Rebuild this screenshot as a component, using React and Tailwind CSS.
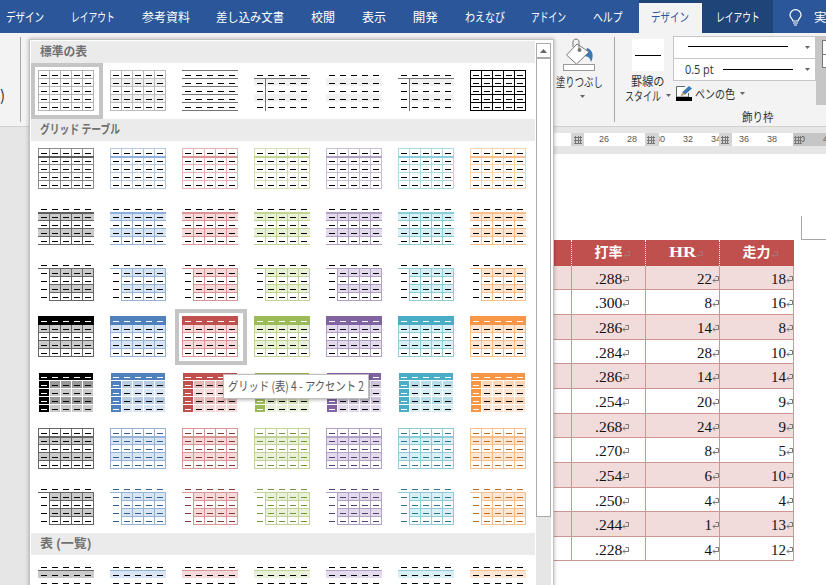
import { useLayoutEffect, useRef, useState } from "react";

const tabs = [
  ["デザイン", 38],
  ["レイアウト", 44],
  ["参考資料", 48],
  ["差し込み文書", 68],
  ["校閲", 24],
  ["表示", 24],
  ["開発", 25],
  ["わえなび", 40],
  ["アドイン", 35],
  ["ヘルプ", 30],
];

const palette = [
  { main: "#000000", line: "#666666", soft: "#8c8c8c", strong: "#5c5c5c", shade: "#cacaca", mid: "#999999", ink: "#000000" },
  { main: "#4f81bd", line: "#95b3d7", soft: "#b4c9e2", strong: "#8fb0dc", shade: "#d8e5f4", mid: "#b8cce4", ink: "#365f91" },
  { main: "#c0504d", line: "#d99694", soft: "#e6b6b5", strong: "#d99694", shade: "#f5dad9", mid: "#e5b9b7", ink: "#833c3a" },
  { main: "#9bbb59", line: "#c0d498", soft: "#d3e0b5", strong: "#c0d692", shade: "#e9f2d8", mid: "#d7e3bc", ink: "#76923c" },
  { main: "#8064a2", line: "#b0a0c6", soft: "#c9bdd9", strong: "#b0a0c6", shade: "#e3dbed", mid: "#ccc1d9", ink: "#524070" },
  { main: "#4bacc6", line: "#8fcbd9", soft: "#afdbe5", strong: "#8ccddc", shade: "#d8eff5", mid: "#b7dde8", ink: "#31758b" },
  { main: "#f79646", line: "#f9be8c", soft: "#fbd3ae", strong: "#fabf8f", shade: "#fde6d3", mid: "#fbd5b5", ink: "#bd6e25" },
];

const gridStyles = ["grid1", "grid2", "grid3", "grid4", "grid5", "grid6", "grid7"];
const plainStyles = ["plain0", "plain1", "plain2", "plain3", "plain4", "plain5", "plain6"];

const players = [
  [".288", "22", "18", "h-[24px]"],
  [".300", "8", "16", "h-[25px]"],
  [".286", "14", "8", "h-[25px]"],
  [".284", "28", "10", "h-[24px]"],
  [".286", "14", "14", "h-[25px]"],
  [".254", "20", "9", "h-[25px]"],
  [".268", "24", "9", "h-[24px]"],
  [".270", "8", "5", "h-[25px]"],
  [".254", "6", "10", "h-[25px]"],
  [".250", "4", "4", "h-[24px]"],
  [".244", "1", "13", "h-[25px]"],
  [".228", "4", "12", "h-[24px]"],
];

// Condenses a label to the given width
function Fit({ children, width, className = "" }) {
  const ref = useRef(null);
  const [scale, setScale] = useState(1);

  useLayoutEffect(() => {
    setScale(width / ref.current.offsetWidth);
  }, [width, children]);

  return (
    <span className={`block shrink-0 ${className}`} style={{ width }}>
      <span
        ref={ref}
        className="inline-block origin-left whitespace-nowrap align-top"
        style={{ transform: `scaleX(${scale})` }}
      >
        {children}
      </span>
    </span>
  );
}

function Arrow() {
  return (
    <svg width="5" height="3" viewBox="0 0 5 3" className="shrink-0">
      <path d="M0 0h5L2.5 3z" fill="#666" />
    </svg>
  );
}

const X = [7, 18, 29, 40, 51, 62];
const Y = [7, 15, 23, 31, 39, 47];

function Thumb({ kind, color }) {
  const out = [];
  const rect = (x, y, w, h, fill) =>
    out.push(<rect key={out.length} x={x} y={y} width={w} height={h} fill={fill} />);
  const hline = (i, fill, from = 0, h = 1) => rect(X[from], Y[i], 63 - X[from], h, fill);
  const vline = (i, fill, from = 0) => rect(X[i], Y[from], 1, 48 - Y[from], fill);
  const bands = (fill, from = 0) => {
    rect(X[from], Y[1], 63 - X[from], 8, fill);
    rect(X[from], Y[3], 63 - X[from], 8, fill);
  };
  const mesh = (fill, col = 0, row = 0) => {
    for (let i = row; i < 6; i++) hline(i, fill, col);
    for (let i = col; i < 6; i++) vline(i, fill, row);
  };
  let dash = () => "#000";
  const c = color;

  if (kind === "plain0") mesh("#b4b4b4");
  if (kind === "plain1") {
    bands("#f1f1f1");
    mesh("#bcbcbc");
  }
  if (kind === "plain2") Y.forEach((_, i) => hline(i, "#767676"));
  if (kind === "plain3" || kind === "plain5") {
    bands("#f1f1f1", kind === "plain5" ? 1 : 0);
    hline(1, "#767676");
    vline(1, "#767676", 1);
  }
  if (kind === "plain4") bands("#f1f1f1");
  if (kind === "plain6") mesh("#000");
  if (kind === "grid1") {
    mesh(c.soft);
    hline(1, c.strong, 0, 2);
  }
  if (kind === "grid2") {
    bands(c.shade);
    for (let i = 1; i < 6; i++) hline(i, c.line);
    for (let i = 1; i < 5; i++) vline(i, c.line, 1);
    hline(1, c.strong, 0, 2);
  }
  if (kind === "grid3" || kind === "grid7") {
    bands(c.shade, 1);
    mesh(c.line, 1, 1);
    hline(1, c.line);
    if (kind === "grid7") dash = () => c.ink;
  }
  if (kind === "grid4") {
    bands(c.shade);
    mesh(c.line);
    rect(7, 7, 56, 9, c.main);
    dash = (row) => (row === 0 ? "#fff" : "#000");
  }
  if (kind === "grid5") {
    rect(8, 8, 54, 39, c.shade);
    rect(8, 16, 54, 7, c.mid);
    rect(8, 32, 54, 7, c.mid);
    rect(8, 8, 10, 39, c.main);
    for (let i = 1; i < 5; i++) {
      hline(i, "#fff");
      vline(i, "#fff", 1);
    }
    rect(8, 8, 54, 7, c.main);
    dash = (row, col) => (row === 0 || col === 0 ? "#fff" : "#000");
  }
  if (kind === "grid6") {
    bands(c.shade);
    mesh(c.line);
    hline(1, c.line, 0, 2);
    dash = () => c.ink;
  }
  if (kind === "list1") {
    bands(c.shade);
    hline(1, c.line);
  }

  for (let row = 0; row < 5; row++) {
    for (let col = 0; col < 5; col++) rect(X[col] + 3, Y[row] + 5, 6, 1, dash(row, col));
  }

  return (
    <svg width="72" height="56" viewBox="0 0 72 56" shapeRendering="crispEdges" className="block">
      {out}
    </svg>
  );
}

function Cell({ kind, color, selected }) {
  return (
    <div className="relative h-[56px] w-[72px] shrink-0">
      <Thumb kind={kind} color={color} />
      {selected && <div className="absolute inset-0 border-4 border-[#c5c5c5]" />}
    </div>
  );
}

function GalleryHeader({ children, width }) {
  return (
    <div className="flex h-[22px] shrink-0 items-center bg-[#ebebeb] pb-[2px] pl-[9px] text-[12.5px] leading-none font-bold text-[#707070]">
      <Fit width={width}>{children}</Fit>
    </div>
  );
}

function StyleGallery() {
  return (
    <div className="absolute top-[39px] left-[29px] flex h-[560px] w-[525px] border border-[#c2c2c2] bg-white pt-px pl-px shadow-[0_0_4px_rgba(0,0,0,0.3)]">
      <div className="flex w-[504px] shrink-0 flex-col">
        <GalleryHeader width={47}>標準の表</GalleryHeader>
        <div className="flex">
          {plainStyles.map((kind, i) => (
            <Cell key={kind} kind={kind} selected={i === 0} />
          ))}
        </div>
        <GalleryHeader width={80}>グリッド テーブル</GalleryHeader>
        {gridStyles.map((kind) => (
          <div key={kind} className="flex">
            {palette.map((color, i) => (
              <Cell key={i} kind={kind} color={color} selected={kind === "grid4" && i === 2} />
            ))}
          </div>
        ))}
        <GalleryHeader width={52}>表 (一覧)</GalleryHeader>
        <div className="flex">
          {palette.map((color, i) => (
            <Cell key={i} kind="list1" color={color} />
          ))}
        </div>
      </div>
      <div className="mt-[2px] ml-px flex w-[15px] shrink-0 flex-col bg-[#e6e6e6]">
        <div className="flex h-[15px] items-center justify-center border border-[#ababab] bg-white">
          <svg width="7" height="4" viewBox="0 0 7 4">
            <path d="M0 4h7L3.5 0z" fill="#666" />
          </svg>
        </div>
        <div className="h-[459px] border border-[#ababab] bg-white" />
      </div>
    </div>
  );
}

function Ribbon() {
  return (
    <div className="flex h-[94px] shrink-0 border-b border-[#d0d0d0] bg-[#f3f3f3] text-[12.5px] leading-[15px] text-[#333]">
      <div className="mt-1 mb-1 w-[21px] shrink-0 border-r border-[#a8a8a8] pt-[50px] text-[15px]">)</div>
      <div className="w-[533px] shrink-0" />
      <div className="mt-1 mb-1 flex w-[61px] shrink-0 flex-col border-r border-[#a8a8a8] pl-[2px]">
        <svg width="36" height="35" viewBox="0 0 36 35" className="ml-[6px]" fill="none">
          <path d="M25 11c4 1 8 6 4 14-1-4-2-5-6-6z" fill="#3c78b4" />
          <path d="M15 7 4.500 18l10 9L27 15z" fill="#fff" stroke="#777" />
          <path d="M11 10V5c0-4 6-4 6 0v7" stroke="#777" />
          <circle cx="17.500" cy="13" r="2" fill="#777" />
          <rect x="1.500" y="27.500" width="31" height="6" fill="#fff" stroke="#999" />
        </svg>
        <Fit width={47} className="mt-[2px]">塗りつぶし</Fit>
        <div className="mt-[6px] ml-[24px]">
          <Arrow />
        </div>
      </div>
      <div className="flex w-[58px] shrink-0 flex-col pt-[6px] pl-[10px]">
        <div className="ml-[7px] flex h-[32px] w-[32px] items-center justify-center bg-white">
          <div className="h-px w-[26px] bg-black" />
        </div>
        <Fit width={34} className="mt-[2px] ml-[6px]">罫線の</Fit>
        <div className="flex items-center gap-[5px]">
          <Fit width={36}>スタイル</Fit>
          <Arrow />
        </div>
      </div>
      <div className="flex w-[143px] shrink-0 flex-col pt-[3px]">
        <div className="flex h-[23px] items-start border border-[#c6c6c6] bg-white pl-[14px]">
          <div className="mt-[9px] h-px w-[100px] bg-black" />
          <div className="mt-[9px] ml-[17px]">
            <Arrow />
          </div>
        </div>
        <div className="-mt-px flex h-[23px] items-center border border-[#c6c6c6] bg-white pl-[11px]">
          <Fit width={29} className="font-['Open_Sans',sans-serif] text-[12px]">0.5 pt</Fit>
          <div className="ml-[9px] h-px w-[70px] bg-black" />
          <div className="ml-[12px]">
            <Arrow />
          </div>
        </div>
        <div className="mt-[3px] flex h-[18px] items-center pl-[2px]">
          <svg width="18" height="17" viewBox="0 0 18 17" className="mr-[2px]">
            <path d="M10 1.500H1.500V12h12V8" fill="#fff" stroke="#5d6b6b" />
            <path d="m6 11 1.500-4L14 1l3 2.500L10 9.500z" fill="#3c78b4" />
            <path d="m6 11 1.500-4 2.500 2.500z" fill="#e0a868" />
            <path d="M1 12h16v4H1z" fill="#000" />
          </svg>
          <Fit width={40}>ペンの色</Fit>
          <div className="ml-[5px]">
            <Arrow />
          </div>
        </div>
        <Fit width={32} className="mt-[7px] ml-[69px]">飾り枠</Fit>
      </div>
      <div className="mt-[3px] h-[69px] grow overflow-hidden bg-[#c6c6c6] pt-[4px] pl-[6px]">
        <div className="h-[15px] w-[10px] border border-[#777] bg-white" />
        <div className="-mt-px h-[14px] w-[10px] border border-[#777] bg-white" />
      </div>
    </div>
  );
}

function RulerMark({ className }) {
  return (
    <div className={`absolute top-0 flex h-[13px] items-center ${className}`}>
      <svg width="8" height="8" viewBox="0 0 8 8" stroke="#777" strokeWidth="1" shapeRendering="crispEdges">
        <path d="M0 1.500h8M0 4.500h8M0 7.500h8M1.500 0v8M4.500 0v8M6.500 0v8" />
      </svg>
    </div>
  );
}

function Ruler() {
  return (
    <div className="h-[27px] shrink-0 bg-[#e6e6e6] pt-[6px] pl-[554px]">
      <div className="relative flex h-[13px] overflow-hidden bg-white pl-[36px] font-['Liberation_Sans',sans-serif] text-[9px] leading-[13px] text-[#555]">
        <div className="absolute inset-y-0 right-0 w-[33px] bg-[#c6c6c6]" />
        {["26", "28", "30", "32", "34", "36", "38", "40", "42"].map((n) => (
          <div key={n} className="relative w-[28px] shrink-0 text-center">
            {n}
          </div>
        ))}
        <RulerMark className="left-[17px] w-[13px] bg-[#d4d4d4] pl-[3px]" />
        <RulerMark className="left-[91px] w-[14px] bg-[#d4d4d4] pl-[2px]" />
        <RulerMark className="left-[165px] w-[13px] bg-[#d4d4d4] pl-[2px]" />
        <RulerMark className="left-[239px] w-[9px] bg-[#c6c6c6] pl-[1px]" />
      </div>
    </div>
  );
}

function Return({ className = "text-[#777]" }) {
  return (
    <svg width="7" height="7" viewBox="0 0 7 7" fill="none" stroke="currentColor" className={`shrink-0 ${className}`}>
      <path d="M3.500.5h3v4H1M3 2.500l-2 2 2 2" />
    </svg>
  );
}

function HeaderCell({ children, width }) {
  return (
    <div className="flex w-[74px] items-center justify-center border-l border-dotted border-white pl-[7px]">
      <Fit width={width}>{children}</Fit>
      <Return className="mt-[3px] text-[#a9747a]" />
    </div>
  );
}

function Document() {
  return (
    <div className="relative grow bg-white pt-[86px] pl-[554px]">
      <div className="w-[240px] font-['Liberation_Serif','Noto_Sans_CJK_JP',serif]">
        <div className="flex h-[26px] bg-[#c0504d] text-[14px] leading-[18px] font-bold text-white">
          <div className="w-[17px]" />
          <HeaderCell width={28}>打率</HeaderCell>
          <HeaderCell width={27}>HR</HeaderCell>
          <HeaderCell width={28}>走力</HeaderCell>
        </div>
        {players.map(([avg, hr, speed, height], i) => (
          <div
            key={i}
            className={`flex border-b border-[#cf9593] text-[15px] leading-none text-[#111] ${height} ${
              i % 2 === 0 ? "bg-[#f2dbdb]" : "bg-white"
            }`}
          >
            <div className="w-[17px]" />
            <div className="flex w-[74px] items-center border-l border-[#cf9593] pt-[3px] pl-[23px]">
              <Fit width={27}>{avg}</Fit>
              <Return />
            </div>
            <div className="flex w-[74px] items-center justify-end border-l border-[#cf9593] pt-[3px]">
              {hr}
              <Return />
            </div>
            <div className="flex w-[75px] items-center justify-end border-x border-[#cf9593] pt-[3px]">
              {speed}
              <Return />
            </div>
          </div>
        ))}
      </div>
      {/* margin crop mark */}
      <div className="absolute top-[62px] right-0 h-[24px] w-[25px] border-b border-l border-[#a6a6a6]" />
    </div>
  );
}

export default function App() {
  return (
    <div className="relative flex h-[585px] w-[826px] flex-col overflow-hidden bg-[#e6e6e6] font-['Noto_Sans_CJK_JP',sans-serif]">
      <div className="flex h-[33px] shrink-0 bg-[#2b579a] text-[12.5px] leading-[16px] text-white">
        <div className="flex w-[639px] shrink-0 items-center gap-[26.8px] pt-px pl-[6px]">
          {tabs.map(([label, width]) => (
            <Fit key={label} width={width}>
              {label}
            </Fit>
          ))}
        </div>
        <div className="flex w-[134px] shrink-0 bg-[#1f4477] pt-[3px]">
          <div className="flex w-[63px] items-center bg-[#f3f3f3] pb-[2px] pl-[12px] text-[#2b579a]">
            <Fit width={38}>デザイン</Fit>
          </div>
          <div className="flex items-center pb-[2px] pl-[14px]">
            <Fit width={44}>レイアウト</Fit>
          </div>
        </div>
        <div className="flex items-center pt-px pl-[16px]">
          <svg width="13" height="17" viewBox="0 0 13 17" fill="none" stroke="#fff" strokeWidth="1.200">
            <path d="M4 12c0-2-3-3-3-6a5.500 5.300 0 0 1 11 0c0 3-3 4-3 6zM4 14h5M5 16h3" />
          </svg>
          <span className="ml-[12px] whitespace-nowrap">実</span>
        </div>
      </div>
      <Ribbon />
      <Ruler />
      <Document />
      <div className="absolute top-[127px] left-0 h-[458px] w-[29px] bg-[#e6e6e6]" />
      <StyleGallery />
      <div className="absolute top-[374px] left-[223px] flex h-[25px] w-[146px] items-center border border-[#bebebe] bg-white pl-[4px] text-[12.5px] leading-none text-[#575757] shadow-[1px_1px_3px_rgba(0,0,0,0.3)]">
        <Fit width={136}>グリッド (表) 4 - アクセント 2</Fit>
      </div>
    </div>
  );
}
